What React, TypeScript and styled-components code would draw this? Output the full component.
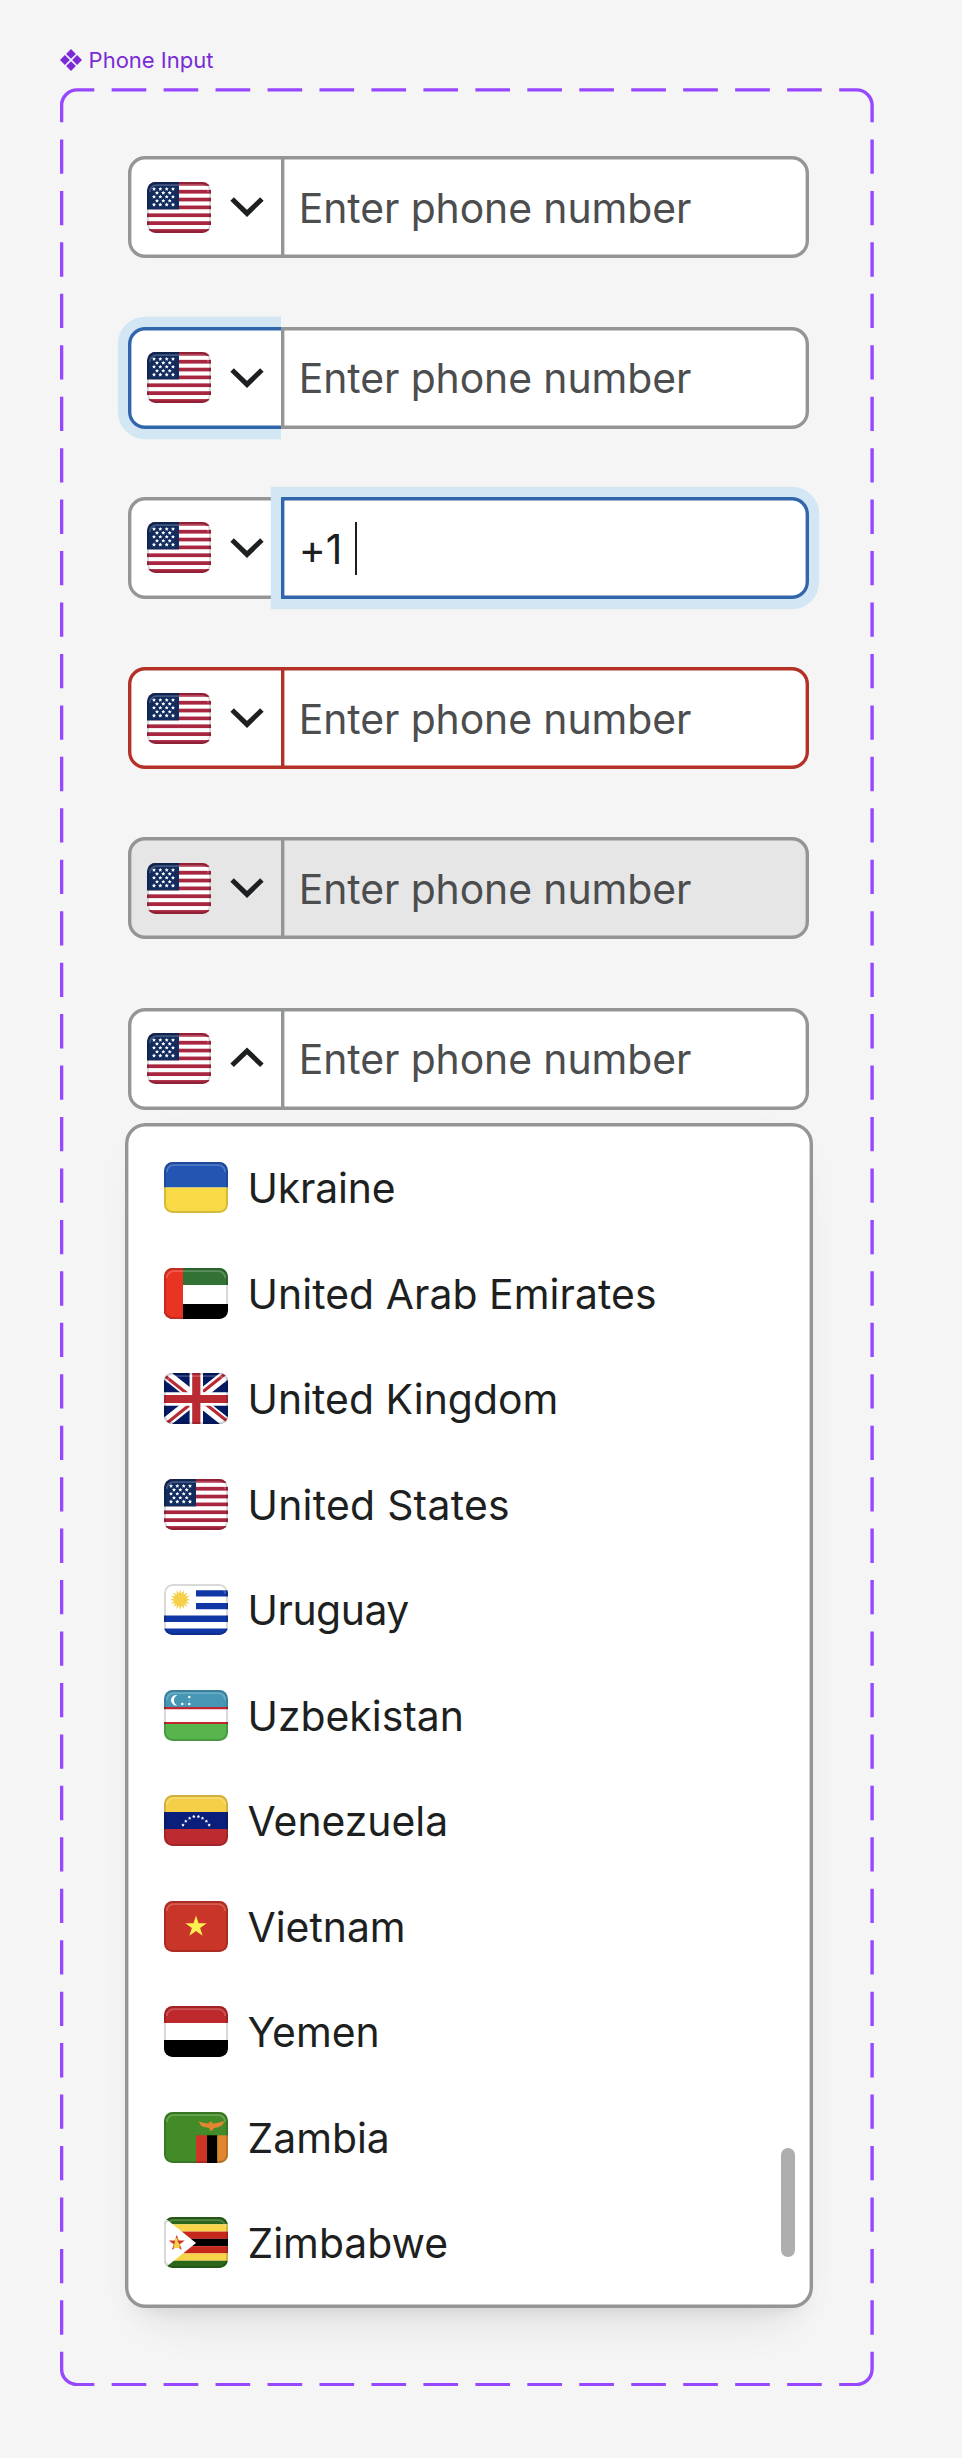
import React from 'react';
import styled, { createGlobalStyle, css } from 'styled-components';

const GlobalStyle = createGlobalStyle`
  *, *::before, *::after { box-sizing: border-box; }
  body {
    margin: 0;
    background: #f5f5f5;
    font-family: Inter, 'Liberation Sans', sans-serif;
    -webkit-font-smoothing: antialiased;
  }
`;

const colors = {
  line: '#949596',
  focus: '#3165ac',
  halo: '#d3e6f3',
  error: '#b33127',
  ink: '#1d1f20',
  muted: '#4b4d4e',
  purple: '#9747ff',
};

/* ---------- layout ---------- */

const Page = styled.main`
  display: flex;
  flex-direction: column;
  align-items: flex-start;
  width: 962px;
  height: 2458px;
  padding: 46px 0 0 60px;
  overflow: hidden;
`;

const Title = styled.h1`
  display: flex;
  align-items: center;
  gap: 6.6px;
  height: 28px;
  margin: 0 0 14px;
  color: #7a2bd6;
  font-size: 22px;
  font-weight: 400;
  line-height: 28px;
`;

const Frame = styled.section`
  position: relative;
  width: 814px;
  height: 2298px;
  padding: 68.3px 65px 0 68px;
`;

const FrameOutline = styled.svg`
  position: absolute;
  inset: 0;
  fill: none;
  stroke: ${colors.purple};
  stroke-width: 3.4;
`;

const Stack = styled.div`
  display: flex;
  flex-direction: column;
  gap: 68.11px;
`;

type State = 'default' | 'countryFocus' | 'inputFocus' | 'error' | 'disabled' | 'open';

const Field = styled.div`
  display: flex;
  width: 681px;
  height: 102.15px;
`;

const outline = (color: string, focused: boolean) => css`
  box-shadow: inset 0 0 0 3.4px ${color}${focused ? `, 0 0 0 10.2px ${colors.halo}` : ''};
`;

const edgeColor = (state: State, focused: boolean) =>
  focused ? colors.focus : state === 'error' ? colors.error : colors.line;

const CountryButton = styled.button<{ $state: State }>`
  display: flex;
  align-items: center;
  gap: 18px;
  flex: none;
  width: 157px;
  margin: 0 -4px 0 0;
  padding: 0 0 0 19px;
  border: 0;
  border-radius: 17px 0 0 17px;
  background: ${({ $state }) => ($state === 'disabled' ? '#e6e6e6' : '#fff')};
  clip-path: inset(-12px 4px -12px -12px);
  ${({ $state }) =>
    outline(edgeColor($state, $state === 'countryFocus'), $state === 'countryFocus')}
`;

const NumberInput = styled.div<{ $state: State }>`
  position: relative;
  display: flex;
  align-items: center;
  flex: 1;
  padding: 1.4px 17px 0 17.7px;
  border-radius: 0 17px 17px 0;
  background: ${({ $state }) => ($state === 'disabled' ? '#e6e6e6' : '#fff')};
  color: ${({ $state }) => ($state === 'inputFocus' ? colors.ink : colors.muted)};
  font-size: 40.86px;
  letter-spacing: -0.07px;
  line-height: 54px;
  white-space: pre;
  ${({ $state }) => outline(edgeColor($state, $state === 'inputFocus'), $state === 'inputFocus')}
`;

const Caret = styled.span`
  width: 2px;
  height: 53px;
  margin-left: 13px;
  background: ${colors.ink};
`;

const Menu = styled.div`
  position: relative;
  width: 688px;
  height: 1185px;
  margin: 13.2px 0 0 -3.3px;
  padding: 12px 39.3px;
  border-radius: 20.4px;
  background: #fff;
  box-shadow:
    inset 0 0 0 3.4px ${colors.line},
    0 34px 44px -24px rgba(0, 0, 0, 0.09),
    0 12px 20px -12px rgba(0, 0, 0, 0.1),
    0 12px 60px rgba(0, 0, 0, 0.015);
`;

const Options = styled.ul`
  margin: 0;
  padding: 0;
  list-style: none;
`;

const Option = styled.li`
  display: flex;
  align-items: center;
  gap: 19.5px;
  height: 105.52px;
`;

const OptionName = styled.span<{ $tracking?: number }>`
  padding-top: 1.2px;
  color: ${colors.ink};
  font-size: 40.86px;
  letter-spacing: ${({ $tracking = 0 }) => $tracking}px;
  line-height: 54px;
  white-space: nowrap;
`;

const ScrollThumb = styled.span`
  position: absolute;
  right: 17.4px;
  bottom: 51px;
  width: 14px;
  height: 109px;
  border-radius: 7px;
  background: #aeaeae;
`;

/* ---------- drawings ---------- */

const DashedOutline = () => {
  const l = 1.6, r = 812.1, t = 1.9, b = 2296.6, c = 15.6;
  const h = '34.64 17.32';
  const v = '34.3 17.15';
  return (
    <FrameOutline width="814" height="2298" viewBox="0 0 814 2298">
      <path d={`M${l} 34.3V${t + c}A${c} ${c} 0 0 1 ${l + c} ${t}H34.3`} />
      <path d={`M779.2 ${t}H${r - c}A${c} ${c} 0 0 1 ${r} ${t + c}V34.3`} />
      <path d={`M${r} 2264.1V${b - c}A${c} ${c} 0 0 1 ${r - c} ${b}H779.2`} />
      <path d={`M34.3 ${b}H${l + c}A${c} ${c} 0 0 1 ${l} ${b - c}V2264.1`} />
      <path strokeDasharray={h} d={`M51.65 ${t}H779M51.65 ${b}H779`} />
      <path strokeDasharray={v} d={`M${l} 51.45V2263.9M${r} 51.45V2263.9`} />
    </FrameOutline>
  );
};

const ComponentMark = () => (
  <svg width="22" height="22" viewBox="-11 -11 22 22" fill="currentColor">
    {[[0, -6.1], [6.1, 0], [0, 6.1], [-6.1, 0]].map(([x, y]) => (
      <path key={`${x},${y}`} d={`M${x} ${y - 4.9}l4.9 4.9l-4.9 4.9l-4.9 -4.9z`} />
    ))}
  </svg>
);

const Chevron = ({ up = false }: { up?: boolean }) => (
  <svg width="36" height="24" viewBox="0 0 36 24" fill="none" stroke={colors.ink} strokeWidth="5">
    <path d={up ? 'M3.1 18.3L18 3.9L32.9 18.3' : 'M3.1 4L18 18.4L32.9 4'} />
  </svg>
);

const star = (cx: number, cy: number, r: number, inner = 0.382) =>
  Array.from({ length: 10 }, (_, i) => {
    const a = (i * Math.PI) / 5 - Math.PI / 2;
    const d = i % 2 ? r * inner : r;
    return `${(cx + d * Math.cos(a)).toFixed(2)},${(cy + d * Math.sin(a)).toFixed(2)}`;
  }).join(' ');

const Stripes = ({ fills }: { fills: string[] }) => (
  <>
    {fills.map((fill, i) => (
      <rect key={i} y={(i * 51) / fills.length} width="64" height={51 / fills.length + 0.02} fill={fill} />
    ))}
  </>
);

const usStars = [7, 10.9, 14.8, 18.8, 22.7].flatMap((y, row) =>
  (row % 2 ? [10, 16.3, 22.7] : [7, 13.3, 19.7, 26]).map((x) => [x, y])
);

const sunRays = Array.from({ length: 32 }, (_, i) => {
  const a = (i * Math.PI) / 16;
  const d = i % 2 ? 6.2 : 10.2;
  return `${(16.3 + d * Math.sin(a)).toFixed(2)},${(15.7 - d * Math.cos(a)).toFixed(2)}`;
}).join(' ');

const art = {
  us: (
    <>
      <Stripes fills={Array.from({ length: 13 }, (_, i) => (i % 2 ? '#fff' : '#a8263f'))} />
      <rect width="32" height="27.4" fill="#122c5e" />
      {usStars.map(([x, y]) => (
        <polygon key={`${x},${y}`} points={star(x, y, 2.1, 0.5)} fill="#fff" />
      ))}
    </>
  ),
  ua: <Stripes fills={['#2356b3', '#f8da47']} />,
  ae: (
    <>
      <rect width="64" height="51" fill="#fff" />
      <rect width="64" height="17" fill="#327335" />
      <rect y="36" width="64" height="15" fill="#000" />
      <rect width="19" height="51" fill="#e93323" />
    </>
  ),
  gb: (
    <>
      <rect width="64" height="51" fill="#041b63" />
      <path d="M0 0L64 51M64 0L0 51" stroke="#fff" strokeWidth="10" />
      <path
        d="M0 2.2L23 20.6M64 48.8L41 30.4M37 20.3L61 1M27 30.7L3 50"
        stroke="#ba2a33"
        strokeWidth="3.2"
      />
      <path d="M32.3 0V51" stroke="#fff" strokeWidth="13.4" />
      <path d="M0 26H64" stroke="#fff" strokeWidth="13.4" />
      <path d="M32.3 0V51M0 26H64" stroke="#ba2a33" strokeWidth="8.2" />
    </>
  ),
  uy: (
    <>
      <rect width="64" height="51" fill="#fff" />
      <path d="M32 6.3H64V12.5H32zM32 19H64V25.2H32zM0 31.5H64V38H0zM0 44.6H64V51H0z" fill="#1136a5" />
      <polygon points={sunRays} fill="#f5d04a" />
    </>
  ),
  uz: (
    <>
      <rect width="64" height="51" fill="#fff" />
      <rect width="64" height="17" fill="#4597b5" />
      <rect y="34" width="64" height="17" fill="#58b44d" />
      <path d="M0 18.2H64M0 33H64" stroke="#c0262f" strokeWidth="2.2" />
      <path d="M13.2 5.2A5.2 5.2 0 1 0 13.2 15.4A5.6 5.6 0 0 1 13.2 5.2z" fill="#fff" />
      <circle cx="18.3" cy="14" r="1.3" fill="#fff" />
      <circle cx="25.3" cy="14" r="1.3" fill="#fff" />
      <circle cx="25.3" cy="7" r="1.2" fill="#fff" />
      <circle cx="25.3" cy="10.4" r="0.5" fill="#fff" opacity=".5" />
      <circle cx="21.7" cy="14" r="0.5" fill="#fff" opacity=".4" />
    </>
  ),
  ve: (
    <>
      <Stripes fills={['#f6cf48', '#0a1e7b', '#bc2b30']} />
      {[
        [19, 30], [21.8, 26.2], [25.6, 23.2], [29.8, 21.5],
        [34.4, 21.5], [38.5, 23.2], [42.4, 26.2], [45.2, 30],
      ].map(([x, y]) => (
        <polygon key={x} points={star(x, y, 1.8, 0.5)} fill="#fff" />
      ))}
    </>
  ),
  vn: (
    <>
      <rect width="64" height="51" fill="#c93629" />
      <polygon points={star(32, 25.7, 11.3)} fill="#fef050" />
    </>
  ),
  ye: <Stripes fills={['#bd292c', '#fff', '#000']} />,
  zm: (
    <>
      <rect width="64" height="51" fill="#438b28" />
      <rect x="32" y="23.3" width="11" height="28" fill="#ce3526" />
      <rect x="43" y="23.3" width="10.3" height="28" fill="#000" />
      <rect x="53.3" y="23.3" width="11" height="28" fill="#e18530" />
      <path
        d="M34.6 9.2C38 10.6 41.5 11.4 44.6 11.4L45.4 10L48 9.6L48.3 11.6C52 11.4 56 10.4 59.6 9L59.8 10.8L57.8 13.4L54.4 15.2L50 16L48.6 18.6H44.8L46.2 17.6L44.6 15.8L39.6 15L36.6 13.2L35.8 11.6Z"
        fill="#e18530"
      />
    </>
  ),
  zw: (
    <>
      <Stripes fills={['#2b661a', '#f7d449', '#c6291c', '#000', '#c6291c', '#f7d449', '#2b661a']} />
      <path d="M0 0.2L32 26L0 51.6z" fill="#fff" />
      <polygon points={star(12.8, 26.2, 8.4)} fill="#cf3527" />
      <path d="M11.2 20.4L13.4 21.2L13.8 24.4L15.8 27.4L15.6 31H9.4L10.2 27.4L11 24.6z" fill="#f5cf45" />
    </>
  ),
};

type Code = keyof typeof art;

const FlagSvg = styled.svg`
  display: block;
  flex: none;
  border-radius: 8.5px;
`;

const Flag = ({ code }: { code: Code }) => (
  <FlagSvg width="64" height="51" viewBox="0 0 64 51">
    {art[code]}
    <rect x="1" y="1" width="62" height="49" rx="7.5" fill="none" stroke="#000" strokeOpacity=".15" strokeWidth="2" />
    <path d="M2.8 10A6.8 6.8 0 0 1 9.6 3.1H54.4A6.8 6.8 0 0 1 61.2 10" fill="none" stroke="#fff" strokeOpacity=".2" strokeWidth="1.8" />
  </FlagSvg>
);

/* ---------- data ---------- */

const fields: State[] = ['default', 'countryFocus', 'inputFocus', 'error', 'disabled', 'open'];

const countries: { code: Code; name: string; tracking?: number }[] = [
  { code: 'ua', name: 'Ukraine', tracking: -0.15 },
  { code: 'ae', name: 'United Arab Emirates', tracking: 0.07 },
  { code: 'gb', name: 'United Kingdom', tracking: 0.05 },
  { code: 'us', name: 'United States', tracking: 0.27 },
  { code: 'uy', name: 'Uruguay', tracking: -0.45 },
  { code: 'uz', name: 'Uzbekistan' },
  { code: 've', name: 'Venezuela' },
  { code: 'vn', name: 'Vietnam' },
  { code: 'ye', name: 'Yemen' },
  { code: 'zm', name: 'Zambia' },
  { code: 'zw', name: 'Zimbabwe' },
];

const PhoneField = ({ state }: { state: State }) => (
  <Field>
    <CountryButton $state={state} aria-label="Country" disabled={state === 'disabled'}>
      <Flag code="us" />
      <Chevron up={state === 'open'} />
    </CountryButton>
    <NumberInput $state={state}>
      {state === 'inputFocus' ? (
        <>
          +1
          <Caret />
        </>
      ) : (
        'Enter phone number'
      )}
    </NumberInput>
  </Field>
);

export default function App() {
  return (
    <>
      <GlobalStyle />
      <Page>
        <Title>
          <ComponentMark />
          Phone Input
        </Title>
        <Frame>
          <DashedOutline />
          <Stack>
            {fields.map((state) => (
              <PhoneField key={state} state={state} />
            ))}
          </Stack>
          <Menu>
            <Options>
              {countries.map(({ code, name, tracking }) => (
                <Option key={code}>
                  <Flag code={code} />
                  <OptionName $tracking={tracking}>{name}</OptionName>
                </Option>
              ))}
            </Options>
            <ScrollThumb />
          </Menu>
        </Frame>
      </Page>
    </>
  );
}
